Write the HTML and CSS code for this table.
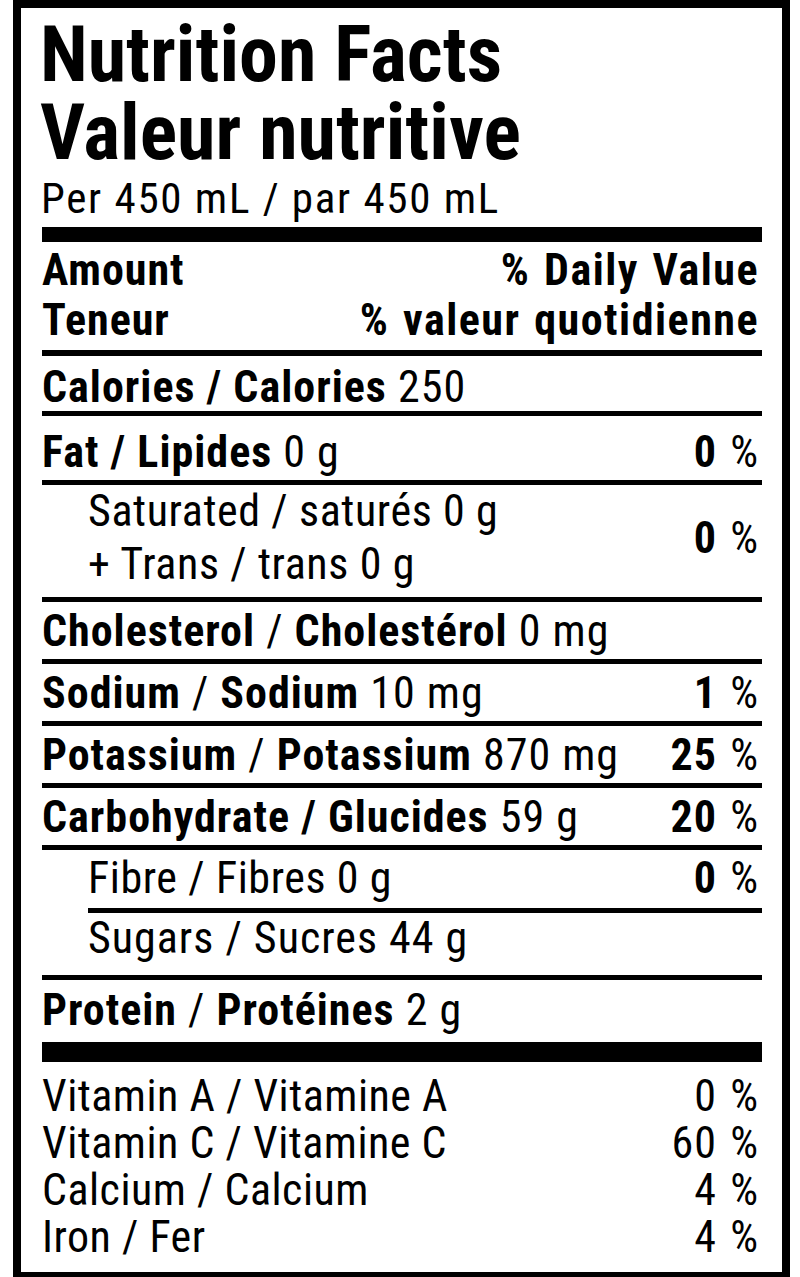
FILE: index.html
```html
<!DOCTYPE html>
<html lang="en">
<head>
<meta charset="utf-8">
<title>Nutrition Facts</title>
<link rel="stylesheet" href="styles.css">
</head>
<body>
<div class="label">
  <h1 class="title">Nutrition Facts<br>Valeur nutritive</h1>
  <p class="serving">Per 450 mL / par 450 mL</p>
  <div class="bar"></div>
  <div class="head">
    <div>Amount<br>Teneur</div>
    <div class="head-right">% Daily Value<br>% valeur quotidienne</div>
  </div>
  <div class="row row-calories"><span><b>Calories / Calories</b> 250</span></div>
  <div class="row row-fat"><span><b>Fat / Lipides</b> 0 g</span><span class="dv"><b>0</b> %</span></div>
  <div class="row row-sat"><span class="sub-text">Saturated / saturés 0 g<br>+ Trans / trans 0 g</span><span class="dv"><b>0</b> %</span></div>
  <div class="row"><span><b>Cholesterol</b> / <b>Cholestérol</b> 0 mg</span></div>
  <div class="row"><span><b>Sodium</b> / <b>Sodium</b> 10 mg</span><span class="dv"><b>1</b> %</span></div>
  <div class="row"><span><b>Potassium</b> / <b>Potassium</b> 870 mg</span><span class="dv"><b>25</b> %</span></div>
  <div class="row"><span><b>Carbohydrate / Glucides</b> 59 g</span><span class="dv"><b>20</b> %</span></div>
  <div class="row row-fibre"><span class="light">Fibre / Fibres 0 g</span><span class="dv"><b>0</b> %</span></div>
  <div class="row row-sugars"><span class="sub-text">Sugars / Sucres 44 g</span></div>
  <div class="row row-protein"><span><b>Protein</b> / <b>Protéines</b> 2 g</span></div>
  <div class="bar bar-bottom"></div>
  <div class="vitamins">
    <div class="vit"><span>Vitamin A / Vitamine A</span><span class="dv">0 %</span></div>
    <div class="vit"><span>Vitamin C / Vitamine C</span><span class="dv">60 %</span></div>
    <div class="vit"><span>Calcium / Calcium</span><span class="dv">4 %</span></div>
    <div class="vit"><span>Iron / Fer</span><span class="dv">4 %</span></div>
  </div>
</div>
</body>
</html>
```
FILE: styles.css
```css
html, body {
  margin: 0;
  padding: 0;
  background: #fff;
}

.label {
  box-sizing: border-box;
  width: 777px;
  margin-left: 13px;
  border: 8px solid #000;
  padding: 8px 20px 0 21px;
  color: #000;
  font-family: "Roboto Condensed", "Roboto", sans-serif;
  font-stretch: condensed;
}

.title {
  margin: 0 0 0 -2px;
  font-size: 78px;
  line-height: 78px;
  font-weight: 700;
}

.serving {
  margin: 0 0 0 -1px;
  font-size: 43px;
  line-height: 52px;
  letter-spacing: 1.7px;
}

.bar {
  height: 15px;
  background: #000;
  margin-top: 3px;
}

.bar-bottom {
  margin-top: 0;
}

.head {
  display: flex;
  justify-content: space-between;
  padding: 3px 3px 5px 0;
  border-bottom: 6px solid #000;
  font-size: 44px;
  line-height: 50px;
  font-weight: 700;
  letter-spacing: 1px;
}

.head-right {
  text-align: right;
  letter-spacing: 1.5px;
  word-spacing: 2px;
}

.row {
  display: flex;
  justify-content: space-between;
  align-items: center;
  padding: 5px 3px 4px 0;
  border-bottom: 5px solid #000;
  font-size: 44px;
  line-height: 48px;
  letter-spacing: 1px;
}

.row b {
  font-weight: 700;
}

.row-calories {
  padding-top: 7px;
  padding-bottom: 0;
}

.row-fat {
  padding-top: 12px;
  padding-bottom: 4px;
}

.row-sat {
  padding-top: 0;
  padding-bottom: 6px;
  line-height: 53px;
}

.row-sat .dv {
  line-height: 48px;
}

.sub-text,
.light {
  letter-spacing: 0.6px;
}

.sub-text {
  padding-left: 46px;
}

.row-fibre {
  margin-left: 46px;
  padding-top: 4px;
  padding-bottom: 6px;
}

.row-sugars {
  padding-top: 1px;
  padding-bottom: 13px;
}

.row-sugars .sub-text {
  letter-spacing: 1px;
}

.row-protein {
  padding-top: 6px;
  padding-bottom: 8px;
}

.dv {
  text-align: right;
  white-space: nowrap;
  letter-spacing: 1px;
  word-spacing: 2px;
}

.vitamins {
  padding: 11px 3px 11px 0;
  font-size: 44px;
  line-height: 47px;
  letter-spacing: 0.5px;
}

.vit {
  display: flex;
  justify-content: space-between;
}
```
